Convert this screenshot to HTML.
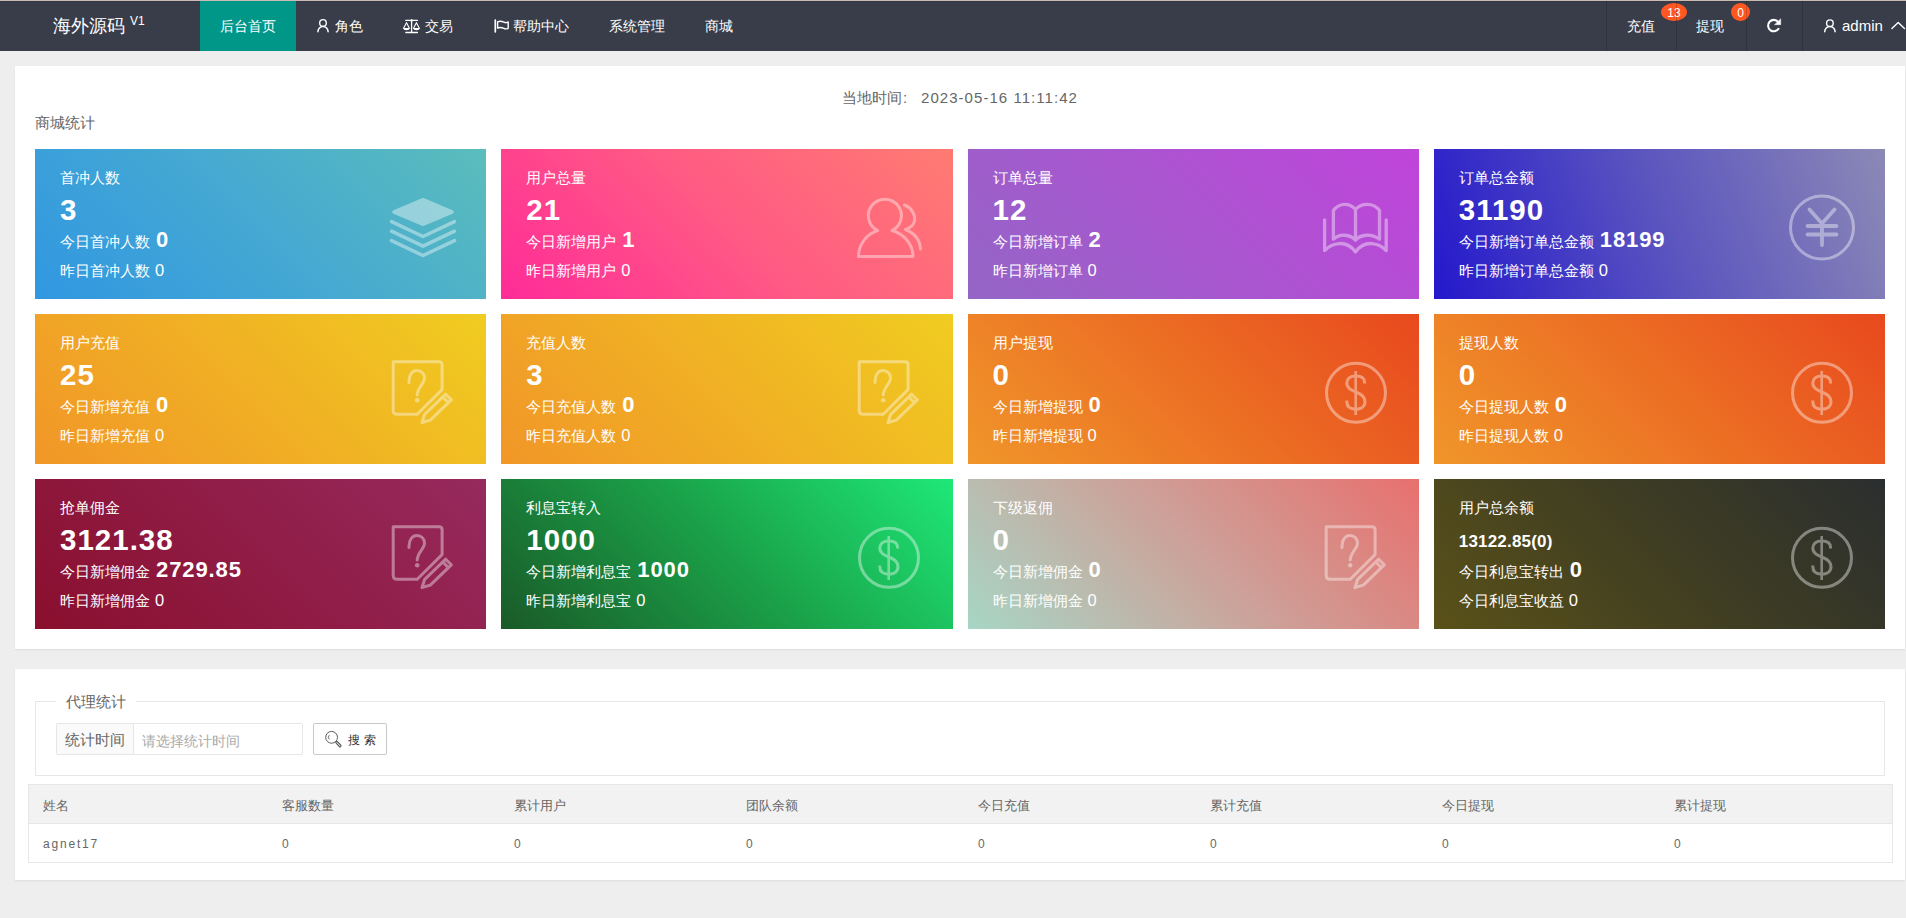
<!DOCTYPE html>
<html><head><meta charset="utf-8">
<style>
*{box-sizing:border-box;margin:0;padding:0}
html,body{width:1906px;height:918px;overflow:hidden;background:#eeeeee;font-family:"Liberation Sans",sans-serif;color:#666}
.abs{position:absolute}
#topline{left:0;top:0;width:1906px;height:1px;background:#cbbab2}
#nav{left:0;top:1px;width:1906px;height:50px;background:#393d49;border-top:1px solid #343847}
.nt{position:absolute;top:1px;height:50px;line-height:50px;color:#fff;font-size:14px;white-space:nowrap}
#logo{left:53px;top:-4.5px;height:50px;line-height:50px;color:#fff;font-size:18px}
#logo sup{font-size:12px;position:relative;top:0px;margin-left:5px}
#tab1{left:200px;top:1px;width:96px;height:50px;background:#009688}
.sep{position:absolute;top:1px;width:1px;height:50px;background:rgba(0,0,0,.16)}
.badge{position:absolute;height:18px;line-height:20px;border-radius:50%;background:#ff5722;color:#fff;font-size:12px;text-align:center}
.panel{position:absolute;left:15px;width:1890px;background:#fff;box-shadow:0 1px 2px 0 rgba(0,0,0,.08)}
.card{position:absolute;width:451.25px;height:150px;color:#fff}
.card .t{position:absolute;left:25px;top:21px;font-size:15px;line-height:16px;white-space:nowrap}
.card .n{position:absolute;left:25px;top:45px;font-size:29.5px;font-weight:bold;line-height:32px;letter-spacing:1px}
.card .n.small{font-size:17px;top:53px;line-height:20px;letter-spacing:0.2px}
.card .l3{position:absolute;left:25px;top:80px;font-size:15px;line-height:22px;white-space:nowrap}
.card .l3 b{font-size:22px;margin-left:6px;letter-spacing:0.9px}
.card .l4{position:absolute;left:25px;top:113px;font-size:15px;line-height:16px;white-space:nowrap}
.card .l4 i{font-style:normal;margin-left:5px;font-size:16.5px}
.card svg{position:absolute}
</style></head><body>
<div class="abs" id="topline"></div>
<div class="abs" id="nav"></div>
<div class="abs" id="tab1"></div>
<div class="abs nt" id="logo">海外源码<sup>V1</sup></div>
<div class="nt" style="left:220px">后台首页</div>
<div class="nt" style="left:335px">角色</div>
<div class="nt" style="left:425px">交易</div>
<div class="nt" style="left:513px">帮助中心</div>
<div class="nt" style="left:609px">系统管理</div>
<div class="nt" style="left:705px">商城</div>

<div class="nt" style="left:1627px">充值</div>
<div class="nt" style="left:1696px">提现</div>
<div class="badge" style="left:1661px;top:3px;width:26px">13</div>
<div class="badge" style="left:1731px;top:3px;width:19px">0</div>
<div class="sep" style="left:1606px"></div>
<div class="sep" style="left:1676px"></div>
<div class="sep" style="left:1746px"></div>
<div class="sep" style="left:1802px"></div>
<div class="nt" style="left:1842px;font-size:15px">admin</div>
<svg class="abs" style="left:0;top:0" width="1906" height="52" viewBox="0 0 1906 52" fill="none" stroke="#fff" stroke-linecap="round" stroke-linejoin="round">
<circle cx="323" cy="22.9" r="3.3" stroke-width="1.4"/>
<path d="M317.9 31.8 A5.1 5.3 0 0 1 328.1 31.8" stroke-width="1.5"/>
<path d="M405.8 20.4 H417.4 M411.6 20.4 V32.4 M405.8 32.5 H417.4" stroke-width="1.3"/>
<circle cx="411.6" cy="20.4" r="1.2" fill="#fff" stroke="none"/>
<path d="M406.5 22.7 L403.6 28.2 M406.5 22.7 L409.4 28.2 M416.4 22.7 L413.5 28.2 M416.4 22.7 L419.3 28.2" stroke-width="1.1"/>
<path d="M403 28 H410 Q409.5 30.3 406.5 30.3 Q403.5 30.3 403 28 Z M413 28 H420 Q419.5 30.3 416.5 30.3 Q413.5 30.3 413 28 Z" fill="#fff" stroke="none"/>
<path d="M495.3 20.2 V31.8" stroke-width="1.7"/>
<path d="M497.6 21.8 C500.2 20.6 502.2 21.4 503.8 22.1 C505.3 22.8 506.8 22.7 508.2 22 V28.3 C506.8 29 505.3 29.1 503.8 28.4 C502.2 27.7 500.2 26.9 497.6 28.1 Z" stroke-width="1.4"/>
<path d="M1778.9 28.1 A5.7 5.7 0 1 1 1778.2 22" stroke-width="2.1" stroke-linecap="butt"/>
<path d="M1774.8 24.7 L1780.7 24.7 L1780.7 19.1 Z" fill="#fff" stroke="#fff" stroke-width="0.5"/>
<circle cx="1829.9" cy="23.2" r="3.3" stroke-width="1.4"/>
<path d="M1824.7 31.7 A5.2 5.2 0 0 1 1835.1 31.7" stroke-width="1.5"/>
<path d="M1891.9 28.6 L1898.2 22.4 L1904.5 28.6" stroke-width="1.4"/>
</svg>

<div class="panel" style="top:66px;height:583px"></div>
<div class="panel" style="top:669px;height:211px"></div>
<div class="card" style="left:35px;top:149px;background:linear-gradient(45deg,#3197e1 0%,#45a9d2 50%,#5bbdbb 100%)"><div class="t">首冲人数</div><div class="n">3</div><div class="l3">今日首冲人数<b>0</b></div><div class="l4">昨日首冲人数<i>0</i></div><svg style="left:350px;top:43px" width="76" height="70" viewBox="0 0 76 70"><g opacity="0.40" stroke="#fff" fill="none" stroke-linecap="round" stroke-linejoin="round"><path d="M38 7.2 L66.5 19.2 Q68.5 20 66.5 20.8 L38 32.8 L9.5 20.8 Q7.5 20 9.5 19.2 Z" fill="#fff" stroke-width="2.6"/><path d="M6.5 29.6 L38 44.5 L69.5 29.6"  stroke-width="3.5"/><path d="M6.5 39.2 L38 54.2 L69.5 39.2" stroke-width="3.5"/><path d="M6.5 48.6 L38 63.5 L69.5 48.6" stroke-width="3.5"/></g></svg></div>
<div class="card" style="left:501.25px;top:149px;background:linear-gradient(45deg,#ff2b98 0%,#ff5a84 50%,#ff7b72 100%)"><div class="t">用户总量</div><div class="n">21</div><div class="l3">今日新增用户<b>1</b></div><div class="l4">昨日新增用户<i>0</i></div><svg style="left:350px;top:43px" width="76" height="70" viewBox="0 0 76 70"><g opacity="0.40" stroke="#fff" fill="none" stroke-linecap="round" stroke-linejoin="round"><path d="M26.7 38.5 A16.5 16.5 0 1 1 41 38.5 C53 42 62 52 62 64.5 L7.5 64.5 C7.5 52 16 42 26.7 38.5 Z" stroke-width="3"/><path d="M53.5 13 C61 16 64.5 23 63.5 29 C62.5 33.5 59 36 54.5 37.5 C63 41 69 48 69.5 57" stroke-width="3"/></g></svg></div>
<div class="card" style="left:967.5px;top:149px;background:linear-gradient(45deg,#9466c6 0%,#c044da 100%)"><div class="t">订单总量</div><div class="n">12</div><div class="l3">今日新增订单<b>2</b></div><div class="l4">昨日新增订单<i>0</i></div><svg style="left:350px;top:43px" width="76" height="70" viewBox="0 0 76 70"><g opacity="0.40" stroke="#fff" fill="none" stroke-linecap="round" stroke-linejoin="round"><path d="M37.5 17.5 C32 11 22 10 15.4 18.5 L15.4 47.2 C22 41.5 32 42 37.5 48.2 C43 42 53 41.5 61.5 47.2 L61.5 18.5 C55 10 43 11 37.5 17.5 Z M37.5 17.5 V48.2" stroke-width="3.3"/><path d="M6.6 27.8 L6.6 58.5 C14 51 28 47 37.5 59.9 C47 47 61 51 68.2 58.5 L68.2 27.8" stroke-width="3.3"/></g></svg></div>
<div class="card" style="left:1433.75px;top:149px;background:linear-gradient(70deg,#2418cc 0%,#5a54bf 50%,#8c89b6 100%)"><div class="t">订单总金额</div><div class="n">31190</div><div class="l3">今日新增订单总金额<b>18199</b></div><div class="l4">昨日新增订单总金额<i>0</i></div><svg style="left:350px;top:43px" width="76" height="70" viewBox="0 0 76 70"><g opacity="0.40" stroke="#fff" fill="none" stroke-linecap="round" stroke-linejoin="round"><circle cx="38" cy="35.5" r="31.5" stroke-width="3"/><path d="M25.5 17.5 L38 31.5 L50.5 17.5 M23.5 34 L52.5 34 M23.5 42.5 L52.5 42.5 M38 31.5 L38 53" stroke-width="3.8"/></g></svg></div>
<div class="card" style="left:35px;top:314px;background:linear-gradient(45deg,#f19628 0%,#f0cc20 100%)"><div class="t">用户充值</div><div class="n">25</div><div class="l3">今日新增充值<b>0</b></div><div class="l4">昨日新增充值<i>0</i></div><svg style="left:350px;top:43px" width="76" height="76" viewBox="0 0 76 76"><g opacity="0.40" stroke="#fff" fill="none" stroke-linecap="round" stroke-linejoin="round"><path d="M32.2 57.3 L12.2 57.3 Q8.2 57.3 8.2 53.3 L8.2 4.7 L54.1 4.7 Q57.1 4.7 57.1 7.7 L57.1 32.6 L32.2 57.3" stroke-width="3"/><path d="M24 25.5 L24 24 C24 17.5 27.5 13.5 32 13.5 C36.5 13.5 39.5 17 39.5 21 C39.5 27 32.5 30 32.2 38" stroke-width="3"/><circle cx="32.2" cy="43.2" r="2.3" fill="#fff" stroke="none"/><path d="M37 65.5 L39.7 57.3 L60.7 37.2 L66.3 42.8 L45.3 63.1 Z M57.8 39.9 L63.4 45.7" stroke-width="3"/></g></svg></div>
<div class="card" style="left:501.25px;top:314px;background:linear-gradient(45deg,#f19628 0%,#f0cc20 100%)"><div class="t">充值人数</div><div class="n">3</div><div class="l3">今日充值人数<b>0</b></div><div class="l4">昨日充值人数<i>0</i></div><svg style="left:350px;top:43px" width="76" height="76" viewBox="0 0 76 76"><g opacity="0.40" stroke="#fff" fill="none" stroke-linecap="round" stroke-linejoin="round"><path d="M32.2 57.3 L12.2 57.3 Q8.2 57.3 8.2 53.3 L8.2 4.7 L54.1 4.7 Q57.1 4.7 57.1 7.7 L57.1 32.6 L32.2 57.3" stroke-width="3"/><path d="M24 25.5 L24 24 C24 17.5 27.5 13.5 32 13.5 C36.5 13.5 39.5 17 39.5 21 C39.5 27 32.5 30 32.2 38" stroke-width="3"/><circle cx="32.2" cy="43.2" r="2.3" fill="#fff" stroke="none"/><path d="M37 65.5 L39.7 57.3 L60.7 37.2 L66.3 42.8 L45.3 63.1 Z M57.8 39.9 L63.4 45.7" stroke-width="3"/></g></svg></div>
<div class="card" style="left:967.5px;top:314px;background:linear-gradient(45deg,#f0962a 0%,#e8491e 100%)"><div class="t">用户提现</div><div class="n">0</div><div class="l3">今日新增提现<b>0</b></div><div class="l4">昨日新增提现<i>0</i></div><svg style="left:350px;top:43px" width="76" height="72" viewBox="0 0 76 72"><g opacity="0.40" stroke="#fff" fill="none" stroke-linecap="round" stroke-linejoin="round"><circle cx="38" cy="35.8" r="29.5" stroke-width="3"/><path d="M37.7 14 L37.7 58" stroke-width="2.6" stroke-linecap="butt"/><path d="M46.6 26.5 L46.6 25.5 C46.6 21 43 18.9 37.8 18.9 C32 18.9 28.8 22 28.8 26 C28.8 31 33 33 37.8 35 C43 37 47 39.5 47 44.5 C47 49.5 43 52.2 37.8 52.2 C32 52.2 28.8 49.5 28.8 44.5 L28.8 43.5" stroke-width="3" stroke-linecap="butt"/></g></svg></div>
<div class="card" style="left:1433.75px;top:314px;background:linear-gradient(45deg,#f0962a 0%,#e8491e 100%)"><div class="t">提现人数</div><div class="n">0</div><div class="l3">今日提现人数<b>0</b></div><div class="l4">昨日提现人数<i>0</i></div><svg style="left:350px;top:43px" width="76" height="72" viewBox="0 0 76 72"><g opacity="0.40" stroke="#fff" fill="none" stroke-linecap="round" stroke-linejoin="round"><circle cx="38" cy="35.8" r="29.5" stroke-width="3"/><path d="M37.7 14 L37.7 58" stroke-width="2.6" stroke-linecap="butt"/><path d="M46.6 26.5 L46.6 25.5 C46.6 21 43 18.9 37.8 18.9 C32 18.9 28.8 22 28.8 26 C28.8 31 33 33 37.8 35 C43 37 47 39.5 47 44.5 C47 49.5 43 52.2 37.8 52.2 C32 52.2 28.8 49.5 28.8 44.5 L28.8 43.5" stroke-width="3" stroke-linecap="butt"/></g></svg></div>
<div class="card" style="left:35px;top:479px;background:linear-gradient(45deg,#8a0f2e 0%,#962a5e 100%)"><div class="t">抢单佣金</div><div class="n">3121.38</div><div class="l3">今日新增佣金<b>2729.85</b></div><div class="l4">昨日新增佣金<i>0</i></div><svg style="left:350px;top:43px" width="76" height="76" viewBox="0 0 76 76"><g opacity="0.40" stroke="#fff" fill="none" stroke-linecap="round" stroke-linejoin="round"><path d="M32.2 57.3 L12.2 57.3 Q8.2 57.3 8.2 53.3 L8.2 4.7 L54.1 4.7 Q57.1 4.7 57.1 7.7 L57.1 32.6 L32.2 57.3" stroke-width="3"/><path d="M24 25.5 L24 24 C24 17.5 27.5 13.5 32 13.5 C36.5 13.5 39.5 17 39.5 21 C39.5 27 32.5 30 32.2 38" stroke-width="3"/><circle cx="32.2" cy="43.2" r="2.3" fill="#fff" stroke="none"/><path d="M37 65.5 L39.7 57.3 L60.7 37.2 L66.3 42.8 L45.3 63.1 Z M57.8 39.9 L63.4 45.7" stroke-width="3"/></g></svg></div>
<div class="card" style="left:501.25px;top:479px;background:linear-gradient(45deg,#1a5a28 0%,#1aa048 50%,#1ee878 100%)"><div class="t">利息宝转入</div><div class="n">1000</div><div class="l3">今日新增利息宝<b>1000</b></div><div class="l4">昨日新增利息宝<i>0</i></div><svg style="left:350px;top:43px" width="76" height="72" viewBox="0 0 76 72"><g opacity="0.40" stroke="#fff" fill="none" stroke-linecap="round" stroke-linejoin="round"><circle cx="38" cy="35.8" r="29.5" stroke-width="3"/><path d="M37.7 14 L37.7 58" stroke-width="2.6" stroke-linecap="butt"/><path d="M46.6 26.5 L46.6 25.5 C46.6 21 43 18.9 37.8 18.9 C32 18.9 28.8 22 28.8 26 C28.8 31 33 33 37.8 35 C43 37 47 39.5 47 44.5 C47 49.5 43 52.2 37.8 52.2 C32 52.2 28.8 49.5 28.8 44.5 L28.8 43.5" stroke-width="3" stroke-linecap="butt"/></g></svg></div>
<div class="card" style="left:967.5px;top:479px;background:linear-gradient(45deg,#a7d6c5 0%,#cca29a 50%,#e8706e 100%)"><div class="t">下级返佣</div><div class="n">0</div><div class="l3">今日新增佣金<b>0</b></div><div class="l4">昨日新增佣金<i>0</i></div><svg style="left:350px;top:43px" width="76" height="76" viewBox="0 0 76 76"><g opacity="0.40" stroke="#fff" fill="none" stroke-linecap="round" stroke-linejoin="round"><path d="M32.2 57.3 L12.2 57.3 Q8.2 57.3 8.2 53.3 L8.2 4.7 L54.1 4.7 Q57.1 4.7 57.1 7.7 L57.1 32.6 L32.2 57.3" stroke-width="3"/><path d="M24 25.5 L24 24 C24 17.5 27.5 13.5 32 13.5 C36.5 13.5 39.5 17 39.5 21 C39.5 27 32.5 30 32.2 38" stroke-width="3"/><circle cx="32.2" cy="43.2" r="2.3" fill="#fff" stroke="none"/><path d="M37 65.5 L39.7 57.3 L60.7 37.2 L66.3 42.8 L45.3 63.1 Z M57.8 39.9 L63.4 45.7" stroke-width="3"/></g></svg></div>
<div class="card" style="left:1433.75px;top:479px;background:linear-gradient(45deg,#5a5118 0%,#403e22 50%,#2b2e2f 100%)"><div class="t">用户总余额</div><div class="n small">13122.85(0)</div><div class="l3">今日利息宝转出<b>0</b></div><div class="l4">今日利息宝收益<i>0</i></div><svg style="left:350px;top:43px" width="76" height="72" viewBox="0 0 76 72"><g opacity="0.40" stroke="#fff" fill="none" stroke-linecap="round" stroke-linejoin="round"><circle cx="38" cy="35.8" r="29.5" stroke-width="3"/><path d="M37.7 14 L37.7 58" stroke-width="2.6" stroke-linecap="butt"/><path d="M46.6 26.5 L46.6 25.5 C46.6 21 43 18.9 37.8 18.9 C32 18.9 28.8 22 28.8 26 C28.8 31 33 33 37.8 35 C43 37 47 39.5 47 44.5 C47 49.5 43 52.2 37.8 52.2 C32 52.2 28.8 49.5 28.8 44.5 L28.8 43.5" stroke-width="3" stroke-linecap="butt"/></g></svg></div>

<div class="abs" style="left:842px;top:90px;font-size:15px;line-height:16px;color:#666;white-space:nowrap">当地时间</div>
<div class="abs" style="left:903px;top:90px;font-size:15px;line-height:16px;color:#666;white-space:nowrap">:</div>
<div class="abs" style="left:921px;top:90px;font-size:15px;line-height:16px;color:#666;white-space:nowrap;letter-spacing:1.05px">2023-05-16 11:11:42</div>
<div class="abs" style="left:35px;top:115px;font-size:15px;line-height:16px;color:#666">商城统计</div>

<div class="abs" style="left:35px;top:701px;width:1850px;height:75px;border:1px solid #e6e6e6"></div>
<div class="abs" style="left:56px;top:693px;width:80px;height:16px;background:#fff"></div>
<div class="abs" style="left:66px;top:694px;font-size:15px;line-height:16px;color:#666">代理统计</div>

<div class="abs" style="left:56px;top:723px;width:247px;height:32px;border:1px solid #e6e6e6;border-radius:2px"></div>
<div class="abs" style="left:57px;top:724px;width:77px;height:30px;background:#fafafa;border-right:1px solid #e6e6e6"></div>
<div class="abs" style="left:65px;top:732px;font-size:15px;line-height:16px;color:#666">统计时间</div>
<div class="abs" style="left:142px;top:733px;font-size:14px;line-height:16px;color:#aaa">请选择统计时间</div>

<div class="abs" style="left:313px;top:723px;width:74px;height:32px;border:1px solid #c9c9c9;border-radius:2px;background:#fff"></div>
<div class="abs" style="left:348px;top:732px;font-size:12px;line-height:16px;color:#333;letter-spacing:4px">搜索</div>
<svg class="abs" style="left:318px;top:726px" width="30" height="26" viewBox="318 726 30 26" fill="none" stroke="#5a5a5a">
<circle cx="331.6" cy="737.3" r="5.9" stroke-width="1"/>
<path d="M329.3 735.2 A3 3 0 0 0 329.3 739.4" stroke-width="0.9"/>
<path d="M336.8 742.4 L340.1 745.9" stroke-width="3" stroke-linecap="round"/>
<path d="M336.8 742.4 L340.1 745.9" stroke-width="1" stroke="#fff" stroke-linecap="round"/>
</svg>

<div class="abs" style="left:28px;top:784px;width:1865px;height:79px;border:1px solid #e6e6e6"></div>
<div class="abs" style="left:29px;top:785px;width:1863px;height:39px;background:#f2f2f2;border-bottom:1px solid #e6e6e6"></div>
<div class="abs" style="left:43px;top:799px;font-size:13px;line-height:14px;color:#666">姓名</div>
<div class="abs" style="left:43px;top:837px;font-size:12px;line-height:14px;color:#666;letter-spacing:1.8px;">agnet17</div>
<div class="abs" style="left:282px;top:799px;font-size:13px;line-height:14px;color:#666">客服数量</div>
<div class="abs" style="left:282px;top:837px;font-size:12px;line-height:14px;color:#666;">0</div>
<div class="abs" style="left:514px;top:799px;font-size:13px;line-height:14px;color:#666">累计用户</div>
<div class="abs" style="left:514px;top:837px;font-size:12px;line-height:14px;color:#666;">0</div>
<div class="abs" style="left:746px;top:799px;font-size:13px;line-height:14px;color:#666">团队余额</div>
<div class="abs" style="left:746px;top:837px;font-size:12px;line-height:14px;color:#666;">0</div>
<div class="abs" style="left:978px;top:799px;font-size:13px;line-height:14px;color:#666">今日充值</div>
<div class="abs" style="left:978px;top:837px;font-size:12px;line-height:14px;color:#666;">0</div>
<div class="abs" style="left:1210px;top:799px;font-size:13px;line-height:14px;color:#666">累计充值</div>
<div class="abs" style="left:1210px;top:837px;font-size:12px;line-height:14px;color:#666;">0</div>
<div class="abs" style="left:1442px;top:799px;font-size:13px;line-height:14px;color:#666">今日提现</div>
<div class="abs" style="left:1442px;top:837px;font-size:12px;line-height:14px;color:#666;">0</div>
<div class="abs" style="left:1674px;top:799px;font-size:13px;line-height:14px;color:#666">累计提现</div>
<div class="abs" style="left:1674px;top:837px;font-size:12px;line-height:14px;color:#666;">0</div>


</body></html>
